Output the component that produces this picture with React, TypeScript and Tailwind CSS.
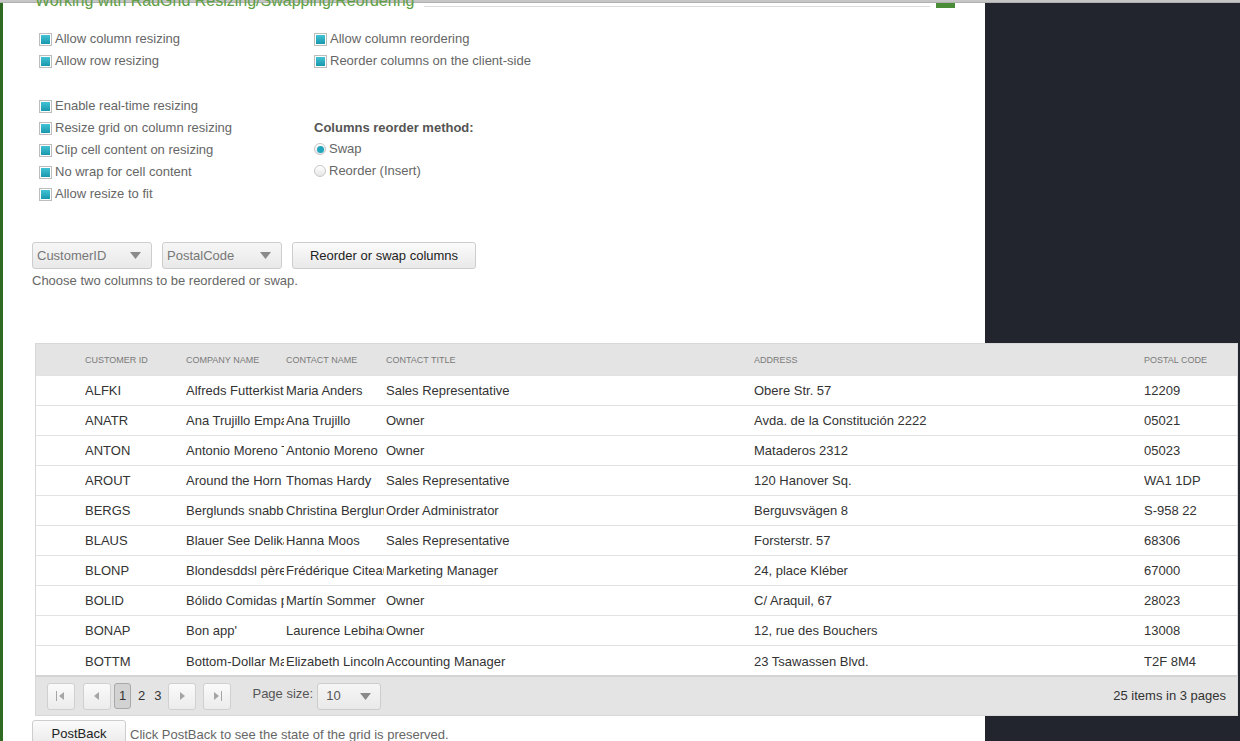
import React from 'react';

const ROWS = [
  ['ALFKI', 'Alfreds Futterkiste', 'Maria Anders', 'Sales Representative', 'Obere Str. 57', '12209'],
  ['ANATR', 'Ana Trujillo Emparedados y helados', 'Ana Trujillo', 'Owner', 'Avda. de la Constitución 2222', '05021'],
  ['ANTON', 'Antonio Moreno Taquería', 'Antonio Moreno', 'Owner', 'Mataderos 2312', '05023'],
  ['AROUT', 'Around the Horn', 'Thomas Hardy', 'Sales Representative', '120 Hanover Sq.', 'WA1 1DP'],
  ['BERGS', 'Berglunds snabbköp', 'Christina Berglund', 'Order Administrator', 'Berguvsvägen 8', 'S-958 22'],
  ['BLAUS', 'Blauer See Delikatessen', 'Hanna Moos', 'Sales Representative', 'Forsterstr. 57', '68306'],
  ['BLONP', 'Blondesddsl père et fils', 'Frédérique Citeaux', 'Marketing Manager', '24, place Kléber', '67000'],
  ['BOLID', 'Bólido Comidas preparadas', 'Martín Sommer', 'Owner', 'C/ Araquil, 67', '28023'],
  ['BONAP', "Bon app'", 'Laurence Lebihan', 'Owner', '12, rue des Bouchers', '13008'],
  ['BOTTM', 'Bottom-Dollar Markets', 'Elizabeth Lincoln', 'Accounting Manager', '23 Tsawassen Blvd.', 'T2F 8M4'],
];

const HEADERS = ['Customer ID', 'Company Name', 'Contact Name', 'Contact Title', 'Address', 'Postal Code'];

const Check = ({ label }: { label: string }) => (
  <div className="h-[22px] flex items-center gap-[3px]">
    <span className="w-[13px] h-[13px] border border-[#bdbdbd] bg-white p-[1px] flex shrink-0">
      <span className="flex-1 bg-linear-to-b from-[#41c3d5] to-[#1897ad]" />
    </span>
    <span className="text-[13px] text-[#666]">{label}</span>
  </div>
);

const Radio = ({ label, checked }: { label: string; checked?: boolean }) => (
  <div className="h-[22px] flex items-center gap-[3px]">
    <span className="w-[12px] h-[12px] rounded-full border border-[#c8c8c8] bg-linear-to-b from-white to-[#e6e6e6] flex items-center justify-center shrink-0">
      {checked && <span className="w-[7px] h-[7px] rounded-full bg-[#22a6bd]" />}
    </span>
    <span className="text-[13px] text-[#666]">{label}</span>
  </div>
);

const Arrow = () => (
  <svg width="11" height="7" viewBox="0 0 11 7" className="shrink-0">
    <path d="M0 0h11L5.5 7z" fill="#8a8a8a" />
  </svg>
);

const Dropdown = ({ value, width }: { value: string; width: string }) => (
  <div className={`${width} h-[27px] flex items-center justify-between pl-[4px] pr-[10px] border border-[#cdcdcd] rounded-[3px] bg-linear-to-b from-[#f6f6f6] to-[#e9e9e9] text-[13px] text-[#777]`}>
    <span>{value}</span>
    <Arrow />
  </div>
);

const PagerBtn = ({ kind }: { kind: 'first' | 'prev' | 'next' | 'last' }) => (
  <div className="w-[28px] h-[27px] flex items-center justify-center border border-[#d0d0d0] rounded-[3px] bg-linear-to-b from-[#fafafa] to-[#ececec]">
    <svg width="12" height="10" viewBox="0 0 12 10">
      {kind === 'first' && (
        <>
          <rect x="1" y="0" width="1" height="10" fill="#a5a5a5" />
          <path d="M9 1v8L4 5z" fill="#a5a5a5" />
        </>
      )}
      {kind === 'prev' && <path d="M8 1v8L3 5z" fill="#a5a5a5" />}
      {kind === 'next' && <path d="M4 1v8l5-4z" fill="#a5a5a5" />}
      {kind === 'last' && (
        <>
          <path d="M3 1v8l5-4z" fill="#a5a5a5" />
          <rect x="10" y="0" width="1" height="10" fill="#a5a5a5" />
        </>
      )}
    </svg>
  </div>
);

export default function App() {
  return (
    <div className="w-[1240px] h-[741px] overflow-hidden flex flex-col bg-[#22252d] font-['Liberation_Sans',Arial,sans-serif]">
      <div className="h-[3px] bg-[#c6c6c6] border-b border-[#b0b0b0] shrink-0" />
      <div className="flex flex-1 min-h-0">
        <div className="w-[985px] shrink-0 bg-white border-l-[3px] border-[#2e6a22] pl-[29px]">
          {/* fieldset legend, scrolled half out of view */}
          <div className="h-[8px] w-[920px] ml-[3px] flex items-start">
            <span className="text-[16px] leading-[16px] -mt-[10px] text-[#5f9f45] whitespace-nowrap">
              Working with RadGrid Resizing/Swapping/Reordering
            </span>
            <div className="flex-1 h-px bg-[#dcdcdc] ml-[10px] mt-[3px]" />
            <div className="w-[19px] h-[5px] bg-[#4a8d37] ml-[6px]" />
          </div>

          <div className="ml-[7px] mt-[17px] flex">
            <div className="w-[275px]">
              <Check label="Allow column resizing" />
              <Check label="Allow row resizing" />
            </div>
            <div>
              <Check label="Allow column reordering" />
              <Check label="Reorder columns on the client-side" />
            </div>
          </div>

          <div className="ml-[7px] mt-[23px] flex">
            <div className="w-[275px]">
              <Check label="Enable real-time resizing" />
              <Check label="Resize grid on column resizing" />
              <Check label="Clip cell content on resizing" />
              <Check label="No wrap for cell content" />
              <Check label="Allow resize to fit" />
            </div>
            <div className="pt-[23px]">
              <div className="h-[20px] flex items-center text-[13px] font-bold text-[#555]">Columns reorder method:</div>
              <Radio label="Swap" checked />
              <Radio label="Reorder (Insert)" />
            </div>
          </div>

          <div className="mt-[37px] flex gap-[10px]">
            <Dropdown value="CustomerID" width="w-[120px]" />
            <Dropdown value="PostalCode" width="w-[120px]" />
            <div className="w-[184px] h-[27px] flex items-center justify-center border border-[#cdcdcd] rounded-[3px] bg-linear-to-b from-[#fbfbfb] to-[#e9e9e9] text-[13px] text-[#222]">
              Reorder or swap columns
            </div>
          </div>
          <div className="mt-[3px] text-[13px] leading-[18px] text-[#666]">Choose two columns to be reordered or swap.</div>

          {/* grid */}
          <div className="relative z-10 mt-[53px] ml-[3px] w-[1203px] border border-[#d8d8d8] bg-white">
            <table className="w-full table-fixed border-collapse">
              <colgroup>
                <col className="w-[49px]" />
                <col className="w-[101px]" />
                <col className="w-[100px]" />
                <col className="w-[100px]" />
                <col className="w-[368px]" />
                <col className="w-[390px]" />
                <col />
              </colgroup>
              <thead>
                <tr className="h-[31px] bg-[#e4e4e4]">
                  <th />
                  {HEADERS.map((h) => (
                    <th key={h} className="pt-[2px] text-left font-normal uppercase text-[9px] text-[#7a7a7a]">
                      <div className="mr-[2px] whitespace-nowrap overflow-hidden">{h}</div>
                    </th>
                  ))}
                </tr>
              </thead>
              <tbody>
                {ROWS.map((r) => (
                  <tr key={r[0]} className="h-[30px] border-t border-[#e2e2e2]">
                    <td />
                    {r.map((c, i) => (
                      <td key={i} className="pt-[2px] text-[13px] text-[#333]">
                        <div className="mr-[2px] whitespace-nowrap overflow-hidden">{c}</div>
                      </td>
                    ))}
                  </tr>
                ))}
              </tbody>
            </table>
            <div className="h-[40px] border-t-2 border-[#d4d4d4] bg-[#e4e4e4] flex items-center pl-[11px] pr-[11px] text-[13px] text-[#333]">
              <PagerBtn kind="first" />
              <div className="ml-[8px]"><PagerBtn kind="prev" /></div>
              <div className="ml-[3px] w-[17px] h-[26px] flex items-center justify-center border border-[#a9a9a9] rounded-[3px] bg-[#d2d2d2]">1</div>
              <span className="ml-[7px]">2</span>
              <span className="ml-[9px]">3</span>
              <div className="ml-[7px]"><PagerBtn kind="next" /></div>
              <div className="ml-[7px]"><PagerBtn kind="last" /></div>
              <span className="ml-[21px] -mt-[5px] text-[#555]">Page size:</span>
              <div className="ml-[4px] w-[64px] h-[27px] flex items-center justify-between pl-[8px] pr-[9px] border border-[#cdcdcd] rounded-[3px] bg-linear-to-b from-[#f6f6f6] to-[#e9e9e9] text-[13px] text-[#555]">
                <span>10</span>
                <Arrow />
              </div>
              <span className="ml-auto">25 items in 3 pages</span>
            </div>
          </div>

          <div className="mt-[4px] flex items-center gap-[4px]">
            <div className="w-[94px] h-[27px] flex items-center justify-center border border-[#cdcdcd] rounded-[3px] bg-linear-to-b from-[#fbfbfb] to-[#e9e9e9] text-[13px] text-[#222]">
              PostBack
            </div>
            <span className="text-[13px] text-[#666] mt-[3px]">Click PostBack to see the state of the grid is preserved.</span>
          </div>
        </div>
        <div className="flex-1 bg-[#22252d]" />
      </div>
    </div>
  );
}
